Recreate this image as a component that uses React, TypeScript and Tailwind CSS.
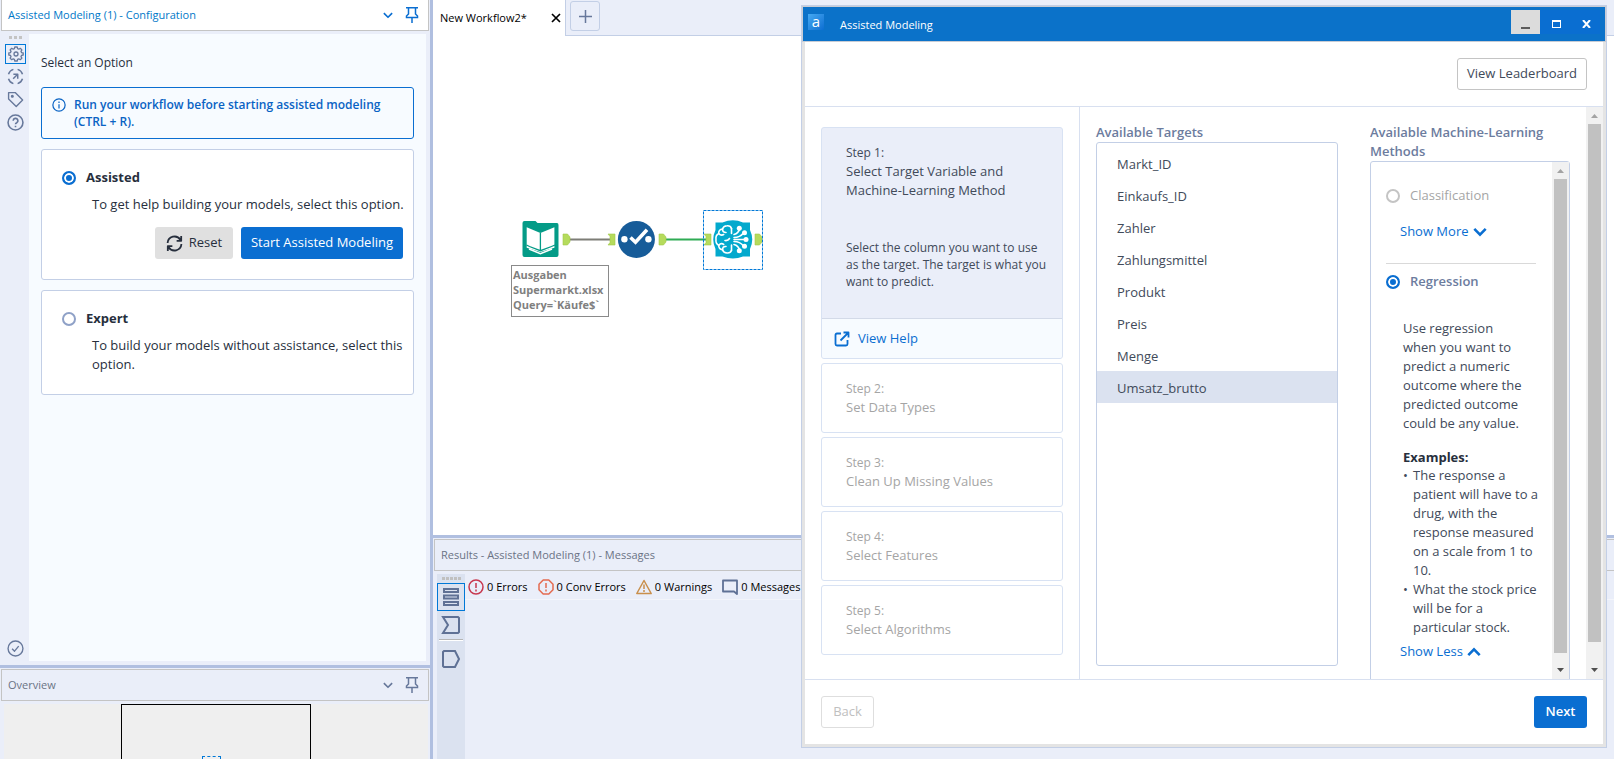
import { useState, type ReactNode } from "react";

const targets = [
  "Markt_ID",
  "Einkaufs_ID",
  "Zahler",
  "Zahlungsmittel",
  "Produkt",
  "Preis",
  "Menge",
  "Umsatz_brutto",
];

const steps = [
  { id: 2, title: "Set Data Types" },
  { id: 3, title: "Clean Up Missing Values" },
  { id: 4, title: "Select Features" },
  { id: 5, title: "Select Algorithms" },
];

const radioClass =
  "h-[14px] w-[14px] shrink-0 appearance-none rounded-full border-2 border-[#8fa1c7] bg-white checked:border-[#0a6ed1] checked:bg-[#0a6ed1] checked:shadow-[inset_0_0_0_2px_white] disabled:border-[#c4c4c4]";

function Svg({
  size,
  width = 1.5,
  children,
}: {
  size: number;
  width?: number;
  children: ReactNode;
}) {
  return (
    <svg
      width={size}
      height={size}
      viewBox="0 0 16 16"
      fill="none"
      stroke="currentColor"
      strokeWidth={width}
      strokeLinejoin="round"
      className="shrink-0"
    >
      {children}
    </svg>
  );
}

function PanelHeader({ title, active }: { title: string; active?: boolean }) {
  return (
    <header
      className={`mx-px flex h-8 shrink-0 items-center border border-[#c4c4c4] pl-[6px] pr-2 ${
        active ? "-mt-px bg-white text-[#0078c8]" : "bg-[#eaeef9] text-[#6b7385]"
      }`}
    >
      <h2 className="flex-1 text-[11px]">{title}</h2>
      <div
        className={`flex items-center gap-[10px] ${
          active ? "text-[#0a6ed1]" : "text-[#67789b]"
        }`}
      >
        <button aria-label="Collapse">
          <Svg size={12} width={2.2}>
            <path d="M2.500 5.500L8 11l5.500-5.500" />
          </Svg>
        </button>
        <button aria-label="Pin">
          <Svg size={16}>
            <path d="M2 .8h12M4.500 1v6L2.500 9v1.500h11V9l-2-2V1M8 10.500V16" strokeLinejoin="miter" />
          </Svg>
        </button>
      </div>
    </header>
  );
}

function ToolStrip() {
  return (
    <nav className="flex w-7 shrink-0 flex-col items-center pb-1 pl-px text-[#67789b]">
      <div className="mt-[2px] flex h-[3px] gap-[2px]">
        <span className="w-[3px] bg-[#c4c4c4]"></span>
        <span className="w-[3px] bg-[#c4c4c4]"></span>
        <span className="w-[3px] bg-[#c4c4c4]"></span>
      </div>
      <button
        aria-label="Configuration"
        className="mt-[5px] flex h-5 w-[21px] items-center justify-center border border-[#0078d7]"
      >
        <Svg size={16} width={1.3}>
          <path d="M6.800 1h2.400l.4 1.700 1.200.5 1.500-.9 1.600 1.600-.9 1.500.5 1.200 1.700.4v2l-1.700.4-.5 1.200.9 1.500-1.600 1.600-1.500-.9-1.200.5L9.200 15H6.800l-.4-1.700-1.200-.5-1.500.9-1.600-1.600.9-1.500-.5-1.200L.8 9V7l1.700-.4L3 5.400l-.9-1.500 1.600-1.600 1.500.9 1.200-.5z" />
          <circle cx="8" cy="8" r="2" />
        </Svg>
      </button>
      <button aria-label="Navigation" className="mt-1">
        <Svg size={17} width={1.4}>
          <path d="M6 1.300a7 7 0 0 0-4.600 4.600M10 1.300a7 7 0 0 1 4.600 4.600M1.400 10.100A7 7 0 0 0 6 14.700M14.600 10.100a7 7 0 0 1-4.600 4.600M5.800 10.200l4-4M6 5.900h4.100V10" />
        </Svg>
      </button>
      <button aria-label="Annotation" className="mt-[6px]">
        <Svg size={17} width={1.3}>
          <path d="M1.500 1.500h6.200l7 7-6 6-7.200-7z" />
          <circle cx="5" cy="5" r=".8" fill="currentColor" />
        </Svg>
      </button>
      <button aria-label="Help" className="mt-[6px]">
        <Svg size={17}>
          <circle cx="8" cy="8" r="7" />
          <path d="M5.800 6.300a2.200 2.200 0 1 1 3.300 1.900C8.300 8.600 8 9 8 9.700M8 11v1.500" />
        </Svg>
      </button>
      <button aria-label="Status" className="mt-auto">
        <Svg size={17} width={1.3}>
          <circle cx="8" cy="8" r="7" />
          <path d="M4.800 8.300l2.300 2.200L11 5.800" />
        </Svg>
      </button>
    </nav>
  );
}

function Configuration() {
  const [mode, setMode] = useState("assisted");

  return (
    <section className="flex min-h-0 flex-1 flex-col">
      <PanelHeader title="Assisted Modeling (1) - Configuration" active />
      <div className="mt-[3px] mb-1 flex min-h-0 flex-1 pl-px pr-1">
        <ToolStrip />
        <div className="flex-1 overflow-hidden bg-[#f7fbff] px-3 pt-5 text-[#272f3d]">
          <p className="text-[12px] leading-[18px]">Select an Option</p>
          <div className="mt-[15px] flex rounded-[3px] border border-[#0a6ed1] py-2 pl-[10px] pr-4 text-[#0a63c4]">
            <span className="mt-[2px]">
              <Svg size={14} width={1.4}>
                <circle cx="8" cy="8" r="7" />
                <path d="M8 7v5M8 4v1.600" />
              </Svg>
            </span>
            <p className="ml-2 text-[12px] font-semibold leading-[17px]">
              Run your workflow before starting assisted modeling (CTRL + R).
            </p>
          </div>
          <div className="mt-[10px] rounded-[3px] border border-[#c3cfe6] bg-white px-[10px] pb-5 pt-[18px]">
            <label className="flex items-center gap-[10px] pl-[10px] text-[13px] font-bold leading-[19px]">
              <input
                type="radio"
                name="mode"
                className={radioClass}
                checked={mode === "assisted"}
                onChange={() => setMode("assisted")}
              />
              Assisted
            </label>
            <p className="-mr-2 mt-2 pl-10 text-[13px] leading-[19px]">
              To get help building your models, select this option.
            </p>
            <div className="mt-[13px] flex justify-end gap-2 text-[13px]">
              <button className="flex h-8 w-[78px] items-center justify-center gap-[6px] rounded-[3px] bg-[#e0e0e0]">
                <Svg size={17} width={1.7}>
                  <path d="M1.500 7.500a6.500 6.500 0 0 1 12-3M14.500 8.500a6.500 6.500 0 0 1-12 3M14.300 1v4.500H10M1.700 15v-4.500H6" />
                </Svg>
                Reset
              </button>
              <button className="h-8 w-[162px] whitespace-nowrap rounded-[3px] bg-[#0a6ed1] text-white">
                Start Assisted Modeling
              </button>
            </div>
          </div>
          <div className="mt-[10px] rounded-[3px] border border-[#c3cfe6] bg-white px-[10px] pb-5 pt-[18px]">
            <label className="flex items-center gap-[10px] pl-[10px] text-[13px] font-bold leading-[19px]">
              <input
                type="radio"
                name="mode"
                className={radioClass}
                checked={mode === "expert"}
                onChange={() => setMode("expert")}
              />
              Expert
            </label>
            <p className="-mr-2 mt-2 pl-10 text-[13px] leading-[19px]">
              To build your models without assistance, select this option.
            </p>
          </div>
        </div>
      </div>
    </section>
  );
}

function Overview() {
  return (
    <section className="flex h-[94px] shrink-0 flex-col overflow-hidden border-t-[3px] border-[#b0bfe0]">
      <div className="mt-px flex flex-col">
        <PanelHeader title="Overview" />
      </div>
      <div className="ml-1 mr-[2px] mt-[3px] flex flex-1 justify-center bg-[#efefef]">
        <div className="w-[190px] border border-b-0 border-black pl-20">
          <div className="mt-[51px] h-5 w-[19px] border border-dashed border-[#0078d7]"></div>
        </div>
      </div>
    </section>
  );
}

function Canvas() {
  return (
    <div className="relative flex-1 overflow-hidden bg-white">
      <svg
        className="absolute left-[70px] top-[174px]"
        width="262"
        height="62"
        viewBox="0 0 262 62"
        fill="none"
      >
        <path d="M66 29.500h44" stroke="#7d7d76" strokeWidth="2" />
        <path d="M162 29.500h42" stroke="#2fab55" strokeWidth="2" />
        <g fill="#b5db5c" stroke="#a3c94c" strokeWidth=".6">
          <path d="M60 24h4.500l2.500 3v5l-2.500 3H60z" />
          <path d="M105 24h7v11h-7l2-2.500v-6z" />
          <path d="M156 24h4.500l2.500 3v5l-2.500 3H156z" />
          <path d="M201 24h7v11h-7l2-2.500v-6z" />
          <path d="M252 24h4.500l2.500 3v5l-2.500 3H252z" />
        </g>
        {/* input data */}
        <path
          d="M19.500 13q0-2 2-2H32.500l2 2H54q1.500 0 1.500 2v30q0 2-2 2H21.500q-2 0-2-2z"
          fill="#049b87"
        />
        <path
          d="M23.700 17.300L37.400 23l14-5.700v20.500L37.400 42l-13.700-4.200z"
          fill="#fff"
        />
        <path
          d="M37.400 23v17.500M23.500 35l3 1.500 10.900 4.200L48.500 36.500l3.500-1.500"
          stroke="#049b87"
          strokeWidth="1.300"
        />
        <path d="M26 39l11.400 4.800L49 39" stroke="#fff" strokeWidth="1.500" />
        {/* select */}
        <circle cx="133.400" cy="29.400" r="18.500" fill="#175c99" />
        <circle cx="121.400" cy="29.300" r="3.200" fill="#fff" />
        <circle cx="145.400" cy="29.300" r="3.200" fill="#fff" />
        <path d="M127.500 27.500l5 4.800 11.500-12.500" stroke="#fff" strokeWidth="3.600" />
        {/* assisted modeling */}
        <path
          d="M212.500 12.500h7q10.500-4.600 20.500 0h7v7.500q4.500 9.500 0 19v7.500h-7q-10 4-20.500 0h-7V39q-4.500-9.500 0-19z"
          fill="#03a9cd"
        />
        <g stroke="#fff" strokeWidth="1.600" strokeLinecap="round">
          <path d="M228.500 18.500q-1-3-4.500-2.700-3.500.2-4.500 3.200-4 .5-3.800 4.500-3.300 1.800-2.700 5.800-.6 4 2.700 6 0 4 3.800 4.500 1 3 4.500 3.200 3.500.3 4.500-2.700" />
          <path d="M219.500 19q0 3.500 3.500 3.500M215.700 23.500q2.300 2.500 5 1M215.700 35.500q2.300-3 5-1M219.500 40q0-4 3.500-3.500M222 30.500q3 .5 4.500-2M228.500 18.500v5M228.500 35v5.300" />
          <path d="M231 24.500q4.500-1 6-6.500M231 27.500q6 0 9.500-4.500M231 29.500h12M231 31.500q6 0 9.500 4.500M231 34.500q4.500 1 6 6.500" />
        </g>
        <g fill="#fff">
          <circle cx="236.300" cy="18.300" r="2.500" />
          <circle cx="241.500" cy="22.800" r="2.500" />
          <circle cx="243" cy="29.500" r="2.500" />
          <circle cx="241.500" cy="36.200" r="2.500" />
          <circle cx="236.300" cy="40.700" r="2.500" />
        </g>
        <rect
          x="200.500"
          y=".5"
          width="59"
          height="59"
          stroke="#0078d7"
          strokeDasharray="3 1"
        />
      </svg>
      <p className="absolute left-[78px] top-[229px] w-[98px] border border-[#8a8a8a] px-px pb-1 pt-px text-[11px] font-bold leading-[15px] text-[#7f7f7f]">
        Ausgaben Supermarkt.xlsx Query=`Käufe$`
      </p>
    </div>
  );
}

function Results() {
  return (
    <section className="flex h-[224px] shrink-0 flex-col border-t-[3px] border-[#b0bfe0]">
      <header className="ml-px mt-px flex h-8 shrink-0 items-center border border-r-0 border-[#c4c4c4] pl-[6px] text-[11px] text-[#6b7385]">
        <h2>Results - Assisted Modeling (1) - Messages</h2>
      </header>
      <div className="flex flex-1 pl-1 pt-[3px]">
        <nav className="flex w-7 flex-col items-center bg-[#dbe2f0] text-[#5f7195]">
          <div className="mt-[3px] flex h-[3px] gap-px">
            {[0, 1, 2, 3, 4].map((dot) => (
              <span key={dot} className="w-[3px] bg-[#c0c0c0]"></span>
            ))}
          </div>
          <button
            aria-label="Messages"
            className="mt-[3px] flex h-7 w-7 items-center justify-center border border-[#0078d7]"
          >
            <svg width="18" height="20" fill="none" stroke="currentColor" strokeWidth="2">
              <path d="M2 2h14v3H2zM2 8.500h14v3H2zM2 15h14v3H2z" />
            </svg>
          </button>
          <button aria-label="Input anchor" className="mt-1">
            <svg width="20" height="20" fill="none" stroke="currentColor" strokeWidth="2">
              <path d="M2 2h15l1 1v14l-1 1H2l5-8z" />
            </svg>
          </button>
          <div className="my-1 h-[2px] w-6 border-t border-[#b5b5b5] bg-white"></div>
          <button aria-label="Output anchor" className="mt-1">
            <svg width="20" height="20" fill="none" stroke="currentColor" strokeWidth="2">
              <path d="M3 2h11l4 8-4 8H3l-1-1V3z" />
            </svg>
          </button>
        </nav>
        <div className="flex-1">
          <div className="flex h-[26px] items-center gap-[10px] whitespace-nowrap border-b border-[#f3f5fb] pl-[3px] pt-px text-[11px] text-black">
            <button className="flex items-center gap-[3px]">
              <span className="text-[#c8384f]">
                <Svg size={16}>
                  <circle cx="8" cy="8" r="7" />
                  <path d="M8 4v5M8 10.500v2" />
                </Svg>
              </span>
              0 Errors
            </button>
            <button className="flex items-center gap-[3px]">
              <span className="text-[#e46b50]">
                <Svg size={16}>
                  <path d="M5.200 1h5.600L15 5.200v5.600L10.800 15H5.200L1 10.800V5.200z" />
                  <path d="M8 4v5M8 10.500v2" />
                </Svg>
              </span>
              0 Conv Errors
            </button>
            <button className="flex items-center gap-[3px]">
              <span className="text-[#c98f4c]">
                <Svg size={16}>
                  <path d="M8 1.500L15.200 14.500H.8zM8 5.500v4.500M8 11v2" />
                </Svg>
              </span>
              0 Warnings
            </button>
            <button className="flex items-center gap-[3px]">
              <span className="text-[#5f7195]">
                <Svg size={16} width={1.8}>
                  <path d="M1 1.500h14V15l-3-2.500H1z" />
                </Svg>
              </span>
              0 Messages
            </button>
          </div>
        </div>
      </div>
    </section>
  );
}

function Scrollbar({ thumb }: { thumb: string }) {
  return (
    <div className="flex w-[17px] shrink-0 flex-col items-center bg-[#f1f1f1]">
      <svg width="17" height="17" className="shrink-0">
        <path d="M5 11h7L8.500 7z" fill="#a3a3a3" />
      </svg>
      <div className={`w-[13px] bg-[#c1c1c1] ${thumb}`}></div>
      <svg width="17" height="17" className="mt-auto shrink-0">
        <path d="M5 6h7l-3.500 4z" fill="#505050" />
      </svg>
    </div>
  );
}

function StepList() {
  return (
    <aside className="flex w-[275px] shrink-0 flex-col gap-1 border-r border-[#d8e0f0] px-4 pt-5">
      <div className="overflow-hidden rounded-[3px] border border-[#d8e2f3] bg-[#eaeef9]">
        <div className="px-6 pb-7 pt-[15px] text-[#414a5a]">
          <p className="text-[12px] leading-[19px]">Step 1:</p>
          <h3 className="pr-8 text-[13px] leading-[19px]">
            Select Target Variable and Machine-Learning Method
          </h3>
          <p className="mt-[39px] -mr-3 text-[12px] leading-[17px]">
            Select the column you want to use
            <br />
            as the target. The target is what you
            <br />
            want to predict.
          </p>
        </div>
        <a
          href="#help"
          className="flex h-10 items-center gap-2 border-t border-[#d3dae8] bg-[#f7fbff] pl-3 text-[13px] text-[#0a6ed1]"
        >
          <Svg size={16} width={1.8}>
            <path d="M7 2.500H3q-1.500 0-1.500 1.500v9q0 1.500 1.500 1.500h9q1.500 0 1.500-1.500V9M9.500 1.500h5v5M14.500 1.500L6.500 9.500" />
          </Svg>
          View Help
        </a>
      </div>
      {steps.map((step) => (
        <div
          key={step.id}
          className="rounded-[3px] border border-[#d8e2f3] px-6 py-[15px] text-[#a5a5a5]"
        >
          <p className="text-[12px] leading-[19px]">Step {step.id}:</p>
          <h3 className="text-[13px] leading-[19px]">{step.title}</h3>
        </div>
      ))}
    </aside>
  );
}

function Methods() {
  const [method, setMethod] = useState("regression");

  return (
    <div className="flex w-[200px] shrink-0 flex-col overflow-hidden">
      <h3 className="text-[13px] font-semibold leading-[19px] text-[#6c7c9e]">
        Available Machine-Learning Methods
      </h3>
      <div className="-mb-px flex min-h-0 flex-1 rounded-t-[3px] border border-[#c3cfe6]">
        <div className="flex-1 overflow-hidden pl-[15px] text-[13px] leading-[19px] text-[#414a5a]">
          <label className="mt-6 flex items-center gap-[10px] text-[#a5a5a5]">
            <input
              type="radio"
              name="method"
              className={radioClass}
              checked={method === "classification"}
              onChange={() => setMethod("classification")}
              disabled
            />
            Classification
          </label>
          <button className="ml-[14px] mt-[17px] flex items-center gap-1 text-[#0a6ed1]">
            Show More
            <Svg size={14} width={3}>
              <path d="M1.500 4.500L8 11l6.500-6.500" strokeLinejoin="miter" />
            </Svg>
          </button>
          <hr className="mr-4 mt-[22px] border-[#d9d9d9]" />
          <label className="mt-2 flex items-center gap-[10px] font-semibold text-[#6c7c9e]">
            <input
              type="radio"
              name="method"
              className={radioClass}
              checked={method === "regression"}
              onChange={() => setMethod("regression")}
            />
            Regression
          </label>
          <div className="ml-[17px] mt-7 pr-3">
            <p className="pr-1">
              Use regression
              <br />
              when you want to predict a numeric outcome where the predicted
              outcome could be any value.
            </p>
            <p className="mt-[15px] font-bold leading-[18px] text-[#272f3d]">
              Examples:
            </p>
            <ul>
              <li className="flex">
                <span className="w-[10px] shrink-0">•</span>
                <span className="whitespace-nowrap">
                  The response a
                  <br />
                  patient will have to a
                  <br />
                  drug, with the
                  <br />
                  response measured
                  <br />
                  on a scale from 1 to
                  <br />
                  10.
                </span>
              </li>
              <li className="flex">
                <span className="w-[10px] shrink-0">•</span>
                <span className="whitespace-nowrap">
                  What the stock price
                  <br />
                  will be for a
                  <br />
                  particular stock.
                </span>
              </li>
            </ul>
          </div>
          <button className="ml-[14px] mt-[5px] flex items-center gap-1 text-[#0a6ed1]">
            Show Less
            <Svg size={14} width={3}>
              <path d="M1.500 11.500L8 5l6.500 6.500" strokeLinejoin="miter" />
            </Svg>
          </button>
        </div>
        <Scrollbar thumb="h-[474px]" />
      </div>
    </div>
  );
}

function AssistedDialog() {
  const [target, setTarget] = useState("Umsatz_brutto");

  return (
    <div
      role="dialog"
      aria-label="Assisted Modeling"
      className="absolute bottom-[11px] left-[801px] right-[7px] top-[5px] flex flex-col border border-[#c3cfe6] bg-[#e4e4e4]"
    >
      <header className="flex h-[36px] shrink-0 items-center border border-[#c8ccd4] bg-[#0b72c9] text-white">
        <span className="mb-1 ml-[5px] flex h-4 w-4 items-center justify-center bg-linear-to-br from-[#45a9f2] to-[#0a6ed1] pb-[3px] text-[15px] leading-4">
          a
        </span>
        <h1 className="ml-4 flex-1 pt-[2px] text-[11px]">Assisted Modeling</h1>
        <div className="mb-1 mr-[5px] flex">
          <button
            aria-label="Minimize"
            className="flex h-6 w-[29px] items-end justify-center bg-[#dcdcdc] pb-[5px]"
          >
            <span className="h-[2px] w-[9px] bg-[#5c5c5c]"></span>
          </button>
          <button
            aria-label="Maximize"
            className="flex h-6 w-8 items-center justify-center bg-[#0a6ed1] pt-1"
          >
            <span className="h-2 w-[9px] border border-t-2 border-white"></span>
          </button>
          <button
            aria-label="Close"
            className="flex h-6 w-7 items-center justify-center bg-[#0a6ed1] pt-1"
          >
            <svg width="9" height="8" stroke="#fff" strokeWidth="2">
              <path d="M1 0l7 8M8 0L1 8" />
            </svg>
          </button>
        </div>
      </header>
      <div className="mx-[3px] mb-[3px] flex min-h-0 flex-1 flex-col bg-white text-[13px] text-[#414a5a]">
        <div className="flex h-[65px] shrink-0 items-center justify-end border-b border-[#d8e0f0] pr-4">
          <button className="h-8 w-[130px] whitespace-nowrap rounded-[3px] border border-[#c4c4c4]">
            View Leaderboard
          </button>
        </div>
        <div className="flex min-h-0 flex-1">
          <StepList />
          <main className="flex flex-1 gap-8 px-4 pt-4">
            <div className="mb-[13px] flex flex-1 flex-col">
              <h3 className="font-semibold leading-[19px] text-[#6c7c9e]">
                Available Targets
              </h3>
              <div className="flex-1 rounded-[3px] border border-[#c3cfe6] pt-1">
                {targets.map((name) => (
                  <button
                    key={name}
                    onClick={() => setTarget(name)}
                    className={`block h-8 w-full px-5 pt-[3px] text-left ${
                      name === target ? "bg-[#dbe2f0]" : ""
                    }`}
                  >
                    {name}
                  </button>
                ))}
              </div>
            </div>
            <Methods />
          </main>
          <Scrollbar thumb="h-[518px]" />
        </div>
        <footer className="flex h-[65px] shrink-0 items-center justify-between border-t border-[#d8e0f0] px-4">
          <button
            disabled
            className="h-8 w-[53px] rounded-[3px] border border-[#dedede] text-[#c0c0c0]"
          >
            Back
          </button>
          <button className="h-8 w-[53px] rounded-[3px] bg-[#0a6ed1] font-semibold text-white">
            Next
          </button>
        </footer>
      </div>
    </div>
  );
}

export default function App() {
  return (
    <div className="relative flex h-screen overflow-hidden bg-[#eaeef9] font-['Open_Sans','Noto_Sans',sans-serif]">
      <div className="flex w-[430px] shrink-0 flex-col">
        <Configuration />
        <Overview />
      </div>
      <div className="w-[3px] shrink-0 bg-[#b0bfe0]"></div>
      <div className="flex min-w-0 flex-1 flex-col">
        <div className="flex h-9 shrink-0">
          <div className="flex w-[132px] items-center justify-between bg-white pl-[7px] pr-1 text-black">
            <span className="text-[11px]">New Workflow2*</span>
            <button aria-label="Close tab">
              <svg width="10" height="10" stroke="currentColor" strokeWidth="1.700">
                <path d="M1 1l8 8M9 1L1 9" />
              </svg>
            </button>
          </div>
          <div className="flex-1 border-b border-l border-[#c3cfe6] pl-1 pt-px">
            <button
              aria-label="New workflow"
              className="flex h-[30px] w-[30px] items-center justify-center rounded-[3px] border border-[#c3cfe6] text-[#67789b]"
            >
              <svg width="13" height="13" stroke="currentColor" strokeWidth="1.500">
                <path d="M6.500 0v13M0 6.500h13" />
              </svg>
            </button>
          </div>
        </div>
        <Canvas />
        <Results />
      </div>
      <AssistedDialog />
    </div>
  );
}
